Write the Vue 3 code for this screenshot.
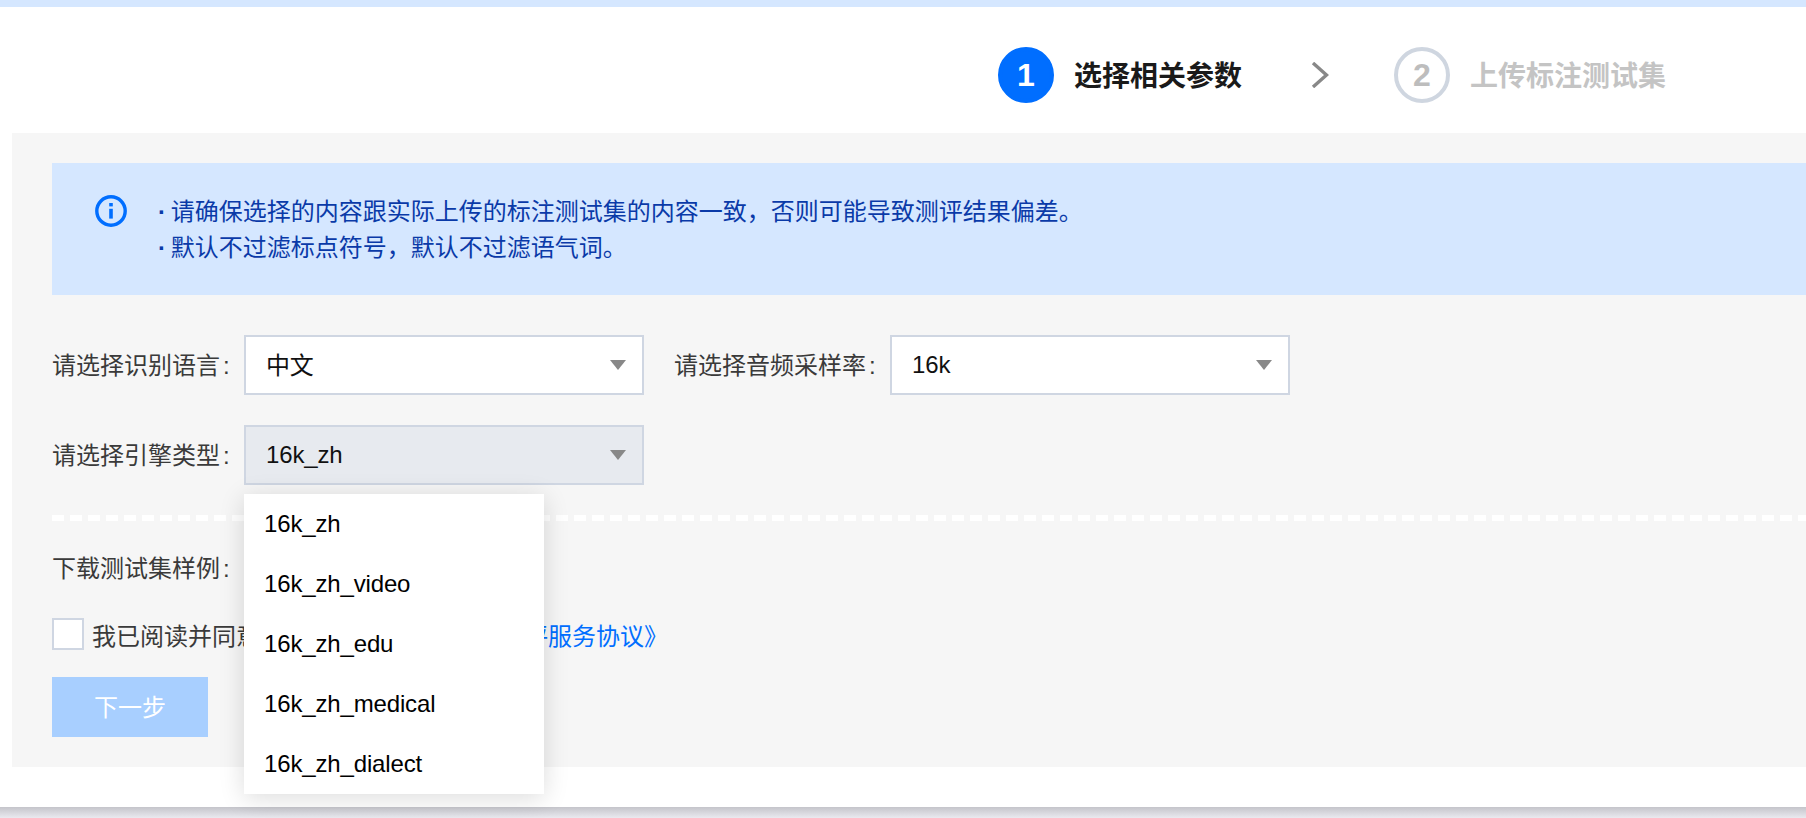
<script setup>
const engines = ['16k_zh', '16k_zh_video', '16k_zh_edu', '16k_zh_medical', '16k_zh_dialect']
</script>

<template>
  <div class="page">
    <div class="topbar"></div>
    <header class="steps">
      <div class="step active">
        <span class="num">1</span>
        <span class="step-text">选择相关参数</span>
      </div>
      <svg class="chev" width="18" height="26" viewBox="0 0 18 26" fill="none">
        <path d="M2 1 L15.5 13 L2 25" stroke="#888888" stroke-width="3.4" />
      </svg>
      <div class="step">
        <span class="num">2</span>
        <span class="step-text">上传标注测试集</span>
      </div>
    </header>

    <main class="panel">
      <section class="alert">
        <svg class="info" width="32" height="32" viewBox="0 0 32 32" fill="none">
          <circle cx="16" cy="16" r="14.2" stroke="#006eff" stroke-width="3.4" />
          <rect x="14.2" y="8" width="3.6" height="3.4" fill="#006eff" />
          <rect x="14.2" y="13.8" width="3.6" height="9.8" fill="#006eff" />
        </svg>
        <div class="alert-text">
          <p><b class="dot">·</b> 请确保选择的内容跟实际上传的标注测试集的内容一致，否则可能导致测评结果偏差。</p>
          <p><b class="dot">·</b> 默认不过滤标点符号，默认不过滤语气词。</p>
        </div>
      </section>

      <div class="row first">
        <label class="label">请选择识别语言<span class="colon">:</span></label>
        <div class="select"><span class="cjk">中文</span><i class="caret"></i></div>
        <label class="label wide">请选择音频采样率<span class="colon">:</span></label>
        <div class="select"><span>16k</span><i class="caret"></i></div>
      </div>

      <div class="row second">
        <label class="label">请选择引擎类型<span class="colon">:</span></label>
        <div class="select-wrap">
          <div class="select open"><span>16k_zh</span><i class="caret"></i></div>
          <ul class="menu">
            <li v-for="e in engines" :key="e">{{ e }}</li>
          </ul>
        </div>
      </div>

      <div class="dash"></div>

      <div class="download">下载测试集样例<span class="colon">:</span></div>

      <div class="agree">
        <span class="check"></span>
        <span class="agree-text">我已阅读并同意<a class="link">《腾讯云语音识别自助测评服务协议》</a></span>
      </div>

      <button class="next" type="button"><span>下一步</span></button>
    </main>

    <div class="footer-space"></div>
    <div class="edge"></div>
  </div>
</template>

<style scoped>
.page {
  height: 818px;
  overflow: hidden;
  background: #fff;
  display: flex;
  flex-direction: column;
  font-family: "Liberation Sans", "Noto Sans CJK SC", sans-serif;
  font-size: 24px;
  color: #3a3a3a;
}
.topbar {
  height: 7px;
  flex: none;
  background: #d5e7ff;
}
.steps {
  height: 126px;
  flex: none;
  display: flex;
  align-items: center;
  padding: 10px 0 0 998px;
  box-sizing: border-box;
}
.step {
  display: flex;
  align-items: center;
  gap: 20px;
  color: #c4c4c4;
}
.step.active {
  color: #1a1a1a;
}
.num {
  width: 56px;
  height: 56px;
  box-sizing: border-box;
  border: 4px solid #cfd6e0;
  border-radius: 50%;
  display: flex;
  align-items: center;
  justify-content: center;
  font-size: 32px;
  font-weight: 700;
  color: #bdbdbd;
}
.active .num {
  background: #006eff;
  border-color: #006eff;
  color: #fff;
}
.step-text {
  font-size: 28px;
  font-weight: 700;
  line-height: 36px;
  padding-top: 3px;
}
.chev {
  margin: 0 65px 0 69px;
}
.panel {
  flex: none;
  height: 634px;
  box-sizing: border-box;
  margin-left: 12px;
  padding: 30px 0 0 40px;
  background: #f6f6f6;
  display: flex;
  flex-direction: column;
  align-items: flex-start;
}
.alert {
  align-self: stretch;
  height: 132px;
  box-sizing: border-box;
  background: #d5e7ff;
  padding: 32px 0 0 43px;
  display: flex;
  gap: 29px;
  color: #0a3aa8;
}
.info {
  flex: none;
}
.alert-text {
  line-height: 36px;
  margin-top: -1px;
}
.alert-text p {
  margin: 0;
}
.dot {
  font-weight: 700;
  margin: 0 -2px 0 2px;
}
.row {
  display: flex;
  align-items: center;
}
.first {
  margin-top: 40px;
}
.second {
  margin-top: 30px;
}
.label {
  width: 192px;
  flex: none;
  padding-bottom: 4px;
  box-sizing: border-box;
}
.label.wide {
  width: 216px;
  margin-left: 30px;
}
.colon {
  margin-left: 3px;
}
.select-wrap {
  position: relative;
}
.select {
  width: 400px;
  height: 60px;
  box-sizing: border-box;
  border: 2px solid #cfd6e2;
  background: #fff;
  padding: 0 20px;
  display: flex;
  align-items: center;
  justify-content: space-between;
  color: #111;
  letter-spacing: -0.15px;
}
.cjk {
  padding-bottom: 4px;
}
.select.open {
  background: #e7eaef;
}
.caret {
  width: 0;
  height: 0;
  border-left: 8px solid transparent;
  border-right: 8px solid transparent;
  border-top: 10px solid #888;
  margin-right: -4px;
}
.menu {
  position: absolute;
  left: 0;
  top: calc(100% + 9px);
  z-index: 2;
  width: 300px;
  margin: 0;
  padding: 0;
  list-style: none;
  background: #fff;
  box-shadow: 0 4px 24px rgba(0, 0, 0, 0.14);
  color: #000;
  letter-spacing: -0.15px;
}
.menu li {
  height: 60px;
  line-height: 60px;
  padding-left: 20px;
}
.dash {
  align-self: stretch;
  height: 6px;
  margin-top: 30px;
  background: repeating-linear-gradient(90deg, #fff 0 12px, transparent 12px 18px);
}
.download {
  margin-top: 30px;
  line-height: 36px;
}
.agree {
  margin-top: 31px;
  height: 32px;
  display: flex;
  align-items: center;
  gap: 8px;
}
.check {
  width: 32px;
  height: 32px;
  box-sizing: border-box;
  border: 2px solid #cfd6e2;
  background: #fff;
}
.agree-text {
  line-height: 36px;
  padding-top: 6px;
  white-space: nowrap;
}
.link {
  color: #006eff;
}
.next {
  margin-top: 27px;
  width: 156px;
  height: 60px;
  border: 0;
  padding: 0 0 4px;
  background: #a8cfff;
  color: #fff;
  font: inherit;
}
.footer-space {
  height: 40px;
  flex: none;
}
.edge {
  height: 11px;
  flex: none;
  background: linear-gradient(#c4c4ca, #eaeaf0);
}
</style>

<style>
html, body {
  margin: 0;
  background: #fff;
}
</style>
